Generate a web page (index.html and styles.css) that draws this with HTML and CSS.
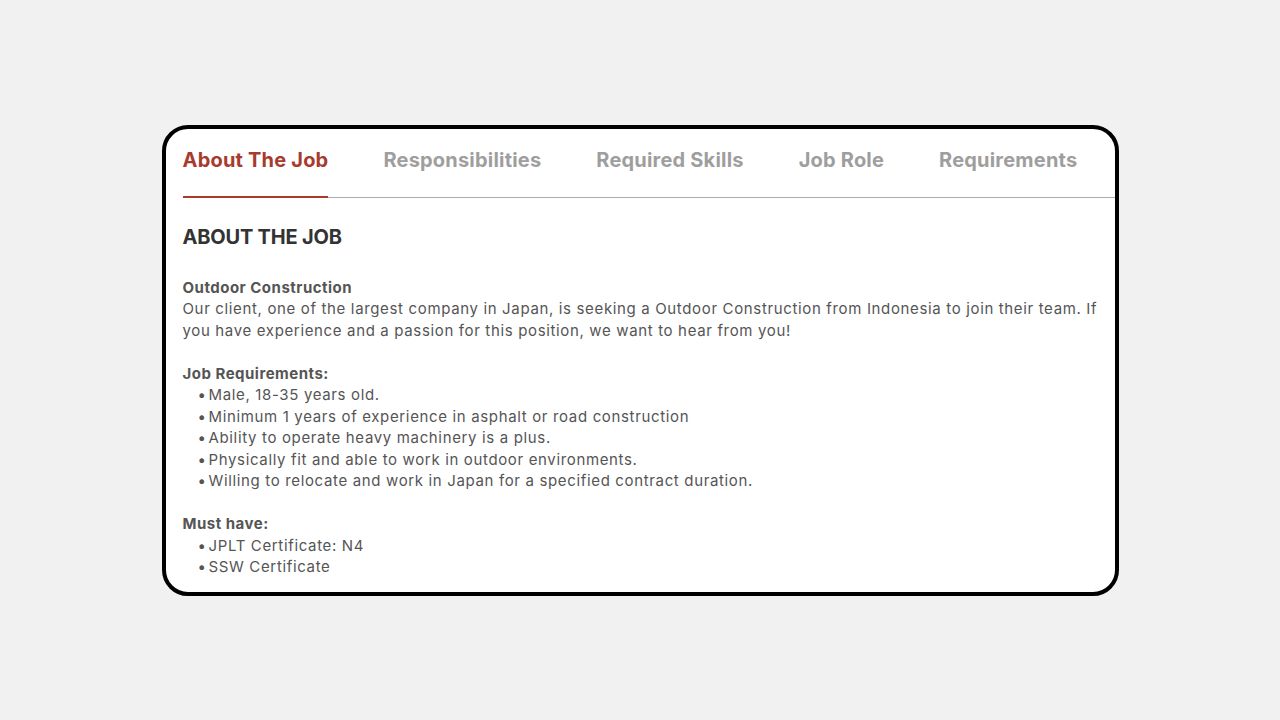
FILE: index.html
```html
<!DOCTYPE html>
<html lang="en">
<head>
<meta charset="utf-8">
<title>About The Job</title>
<link rel="stylesheet" href="styles.css">
</head>
<body>
<div class="card">
  <nav class="tabs">
    <span class="tab active">About The Job</span>
    <span class="tab">Responsibilities</span>
    <span class="tab">Required Skills</span>
    <span class="tab">Job Role</span>
    <span class="tab">Requirements</span>
  </nav>
  <section class="content">
    <h2 class="title">ABOUT THE JOB</h2>
    <div class="block">
      <p class="label">Outdoor Construction</p>
      <p>Our client, one of the largest company in Japan, is seeking a Outdoor Construction from Indonesia to join their team. If you have experience and a passion for this position, we want to hear from you!</p>
    </div>
    <div class="block">
      <p class="label">Job Requirements:</p>
      <ul class="list">
        <li>Male, 18-35 years old.</li>
        <li>Minimum 1 years of experience in asphalt or road construction</li>
        <li>Ability to operate heavy machinery is a plus.</li>
        <li>Physically fit and able to work in outdoor environments.</li>
        <li>Willing to relocate and work in Japan for a specified contract duration.</li>
      </ul>
    </div>
    <div class="block">
      <p class="label">Must have:</p>
      <ul class="list">
        <li>JPLT Certificate: N4</li>
        <li>SSW Certificate</li>
      </ul>
    </div>
  </section>
</div>
</body>
</html>
```

FILE: styles.css
```css
* { box-sizing: border-box; }
html, body { margin: 0; padding: 0; }
body {
  background: #f1f1f1;
  height: 100vh;
  display: flex;
  align-items: center;
  justify-content: center;
  font-family: Inter, "Liberation Sans", sans-serif;
}
.card {
  width: 957px;
  background: #fff;
  border: 4px solid #000;
  border-radius: 26px;
  padding-left: 17px;
  padding-bottom: 14px;
  overflow: hidden;
}
.tabs {
  display: flex;
  gap: 55px;
  border-bottom: 1px solid #ababab;
}
.tab {
  font-size: 20px;
  font-weight: 700;
  color: #9e9e9e;
  line-height: 24px;
  padding: 19px 0 24px;
  margin-bottom: -1px;
  border-bottom: 2px solid transparent;
  letter-spacing: 0.2px;
}
.tab.active {
  color: #a83a2e;
  border-bottom-color: #a83a2e;
}
.content {
  padding-right: 8px;
  color: #555;
  font-size: 15px;
  line-height: 21.5px;
  letter-spacing: 0.65px;
}
.title {
  margin: 27px 0 28px;
  font-size: 20px;
  line-height: 24px;
  font-weight: 700;
  color: #333;
  letter-spacing: -0.2px;
}
.block { margin-bottom: 21.5px; }
.block:last-child { margin-bottom: 0; }
.block p { margin: 0; }
.label { font-weight: 700; letter-spacing: 0.5px; }
.list {
  list-style: none;
  margin: 0;
  padding: 0 0 0 15px;
}
.list li::before {
  content: "•";
  display: inline-block;
  width: 11px;
  letter-spacing: 0;
}
```
